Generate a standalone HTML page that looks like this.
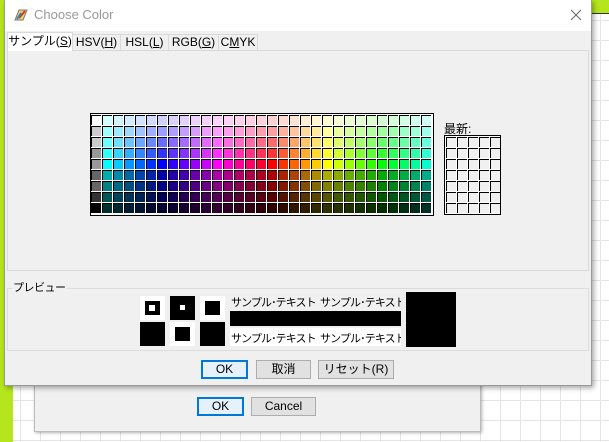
<!DOCTYPE html>
<html><head><meta charset="utf-8"><style>
*{box-sizing:border-box;margin:0;padding:0}
body{width:609px;height:442px;overflow:hidden;position:relative;background:#fff;font-family:"Liberation Sans","Noto Sans CJK JP",sans-serif;font-size:12px;color:#000}
.bggrid{position:absolute;inset:0;background-image:linear-gradient(#e4e4e4 1px,transparent 1px),linear-gradient(90deg,#e4e4e4 1px,transparent 1px);background-size:20px 20px}
.abs{position:absolute}
.btn{position:absolute;height:19px;border:1px solid #adadad;background:#e1e1e1;text-align:center;line-height:17px;font-size:12px}
.btn.def{border:2px solid #0078d7;background:#e5f1fb;line-height:15px}
.tab{position:absolute;top:34px;height:17px;border:1px solid #d9d9d9;background:#f0f0f0;font-size:12px;line-height:15px;text-align:center}
#pal{position:absolute;left:90px;top:113px;width:344px;height:103px;border:1px solid #000;background:#fff}
.c{position:absolute;width:10px;height:10px;border-top:1px solid #000;border-left:1px solid #000}
.w{position:absolute;background:#fff}
.b{position:absolute;background:#000}
.pt{position:absolute;left:231px;width:170px;font-size:11px;letter-spacing:-0.9px;white-space:nowrap;overflow:hidden}
</style></head><body>
<div class="bggrid"></div>
<div class="abs" style="left:0;top:0;width:13px;height:442px;background:#b5e61d"></div>
<div class="abs" style="left:591px;top:0;width:18px;height:14px;background:#b5e61d;border-bottom:1px solid #333"></div>
<div class="abs" style="left:34px;top:380px;width:447px;height:52px;background:#f0f0f0;border:1px solid #bbb;box-shadow:1px 1px 3px rgba(0,0,0,.3)"></div>
<div class="btn def" style="left:197px;top:397px;width:47px">OK</div>
<div class="btn" style="left:251px;top:397px;width:65px">Cancel</div>
<div class="abs" style="left:4px;top:0;width:588px;height:386px;background:#f0f0f0;border:1px solid #999;box-shadow:2px 2px 5px rgba(0,0,0,.35)"></div>
<div class="abs" style="left:5px;top:0;width:586px;height:31px;background:#fff"></div>
<svg class="abs" style="left:13px;top:7px" width="16" height="16" viewBox="0 0 16 16"><path d="M2 13 L6 3 L14 3 L10 13Z" fill="#f4d35e" stroke="#777"/><path d="M6 11 L12 4" stroke="#c33" stroke-width="2"/><path d="M4 12 L8 6" stroke="#38c" stroke-width="2"/></svg>
<div class="abs" style="left:34px;top:7px;font-size:13px;color:#999">Choose Color</div>
<svg class="abs" style="left:570px;top:9px" width="12" height="12"><path d="M1 1L11 11M11 1L1 11" stroke="#666" stroke-width="1"/></svg>
<div class="abs" style="left:7px;top:50px;width:582px;height:221px;border:1px solid #d9d9d9;background:#f0f0f0"></div>
<div class="tab" style="left:72px;width:49px">HSV(<u>H</u>)</div>
<div class="tab" style="left:120px;width:49px">HSL(<u>L</u>)</div>
<div class="tab" style="left:168px;width:51px">RGB(<u>G</u>)</div>
<div class="tab" style="left:218px;width:40px">C<u>M</u>YK</div>
<div class="tab" style="left:7px;top:32px;height:19px;width:66px;background:#fff;border-bottom:none;line-height:17px">サンプル(<u>S</u>)</div>
<div id="pal"></div>
<div class="abs" style="left:444px;top:120px;font-size:12px">最新:</div>
<div id="rec" class="abs" style="left:444px;top:135px;width:57px;height:80px;border:1px solid #000;background:#fff"></div>
<div class="abs" style="left:7px;top:288px;width:582px;height:63px;border:1px solid #dcdcdc"></div>
<div class="abs" style="left:12px;top:279px;background:#f0f0f0;padding:0 1px;font-size:11px;letter-spacing:-0.5px">プレビュー</div>
<div class="w" style="left:140px;top:296px;width:25px;height:24px"></div><div class="b" style="left:145px;top:301px;width:15px;height:14px"></div><div class="w" style="left:149px;top:305px;width:6px;height:6px"></div>
<div class="b" style="left:170px;top:296px;width:25px;height:24px"></div><div class="w" style="left:180px;top:305px;width:5px;height:5px"></div>
<div class="w" style="left:200px;top:296px;width:25px;height:24px"></div><div class="b" style="left:205px;top:301px;width:15px;height:14px"></div>
<div class="b" style="left:140px;top:322px;width:25px;height:24px"></div>
<div class="w" style="left:170px;top:322px;width:25px;height:24px"></div><div class="b" style="left:175px;top:327px;width:15px;height:14px"></div>
<div class="b" style="left:200px;top:322px;width:25px;height:24px"></div>
<div class="pt" style="top:294px">サンプル･テキスト&nbsp; サンプル･テキスト</div>
<div class="b" style="left:230px;top:311px;width:171px;height:15px"></div>
<div class="w" style="left:230px;top:328px;width:171px;height:18px"></div>
<div class="pt" style="top:330px">サンプル･テキスト&nbsp; サンプル･テキスト</div>
<div class="b" style="left:406px;top:292px;width:50px;height:55px"></div>
<div class="btn def" style="left:201px;top:360px;width:47px">OK</div>
<div class="btn" style="left:256px;top:360px;width:55px">取消</div>
<div class="btn" style="left:318px;top:360px;width:76px">リセット(R)</div>
<script>
var hues=[[0,255,255],[0,204,255],[0,153,255],[0,102,255],[0,51,255],[0,0,255],[51,0,255],[102,0,255],[153,0,255],[204,0,255],[255,0,255],[255,0,204],[255,0,153],[255,0,102],[255,0,51],[255,0,0],[255,51,0],[255,102,0],[255,153,0],[255,204,0],[255,255,0],[204,255,0],[153,255,0],[102,255,0],[51,255,0],[0,255,0],[0,255,51],[0,255,102],[0,255,153],[0,255,204]];
var mix=[0.82,0.62,0.42,0.2,0,0.8,0.6,0.4,0.22];
var p=document.getElementById('pal'),h='';
for(var r=0;r<9;r++)for(var c=0;c<31;c++){var col;
 if(c==0){var g=[255,204,204,153,153,102,102,51,0][r];col=[g,g,g];}
 else{var b=hues[c-1];if(r<4){var m=mix[r];col=b.map(function(v){return Math.round(v+(255-v)*m)});}else if(r==4)col=b;else{var m=mix[r];col=b.map(function(v){return Math.round(v*m*0.85)});}}
 h+='<div class="c" style="left:'+(c*11)+'px;top:'+(r*11+1)+'px;background:rgb('+col.join(',')+')"></div>';}
p.innerHTML=h;
var q=document.getElementById('rec');h='';
for(var r=0;r<7;r++)for(var c=0;c<5;c++)h+='<div class="c" style="left:'+(c*11+1)+'px;top:'+(r*11+1)+'px;background:#f0f0f0"></div>';
q.innerHTML=h;
</script>
</body></html>
